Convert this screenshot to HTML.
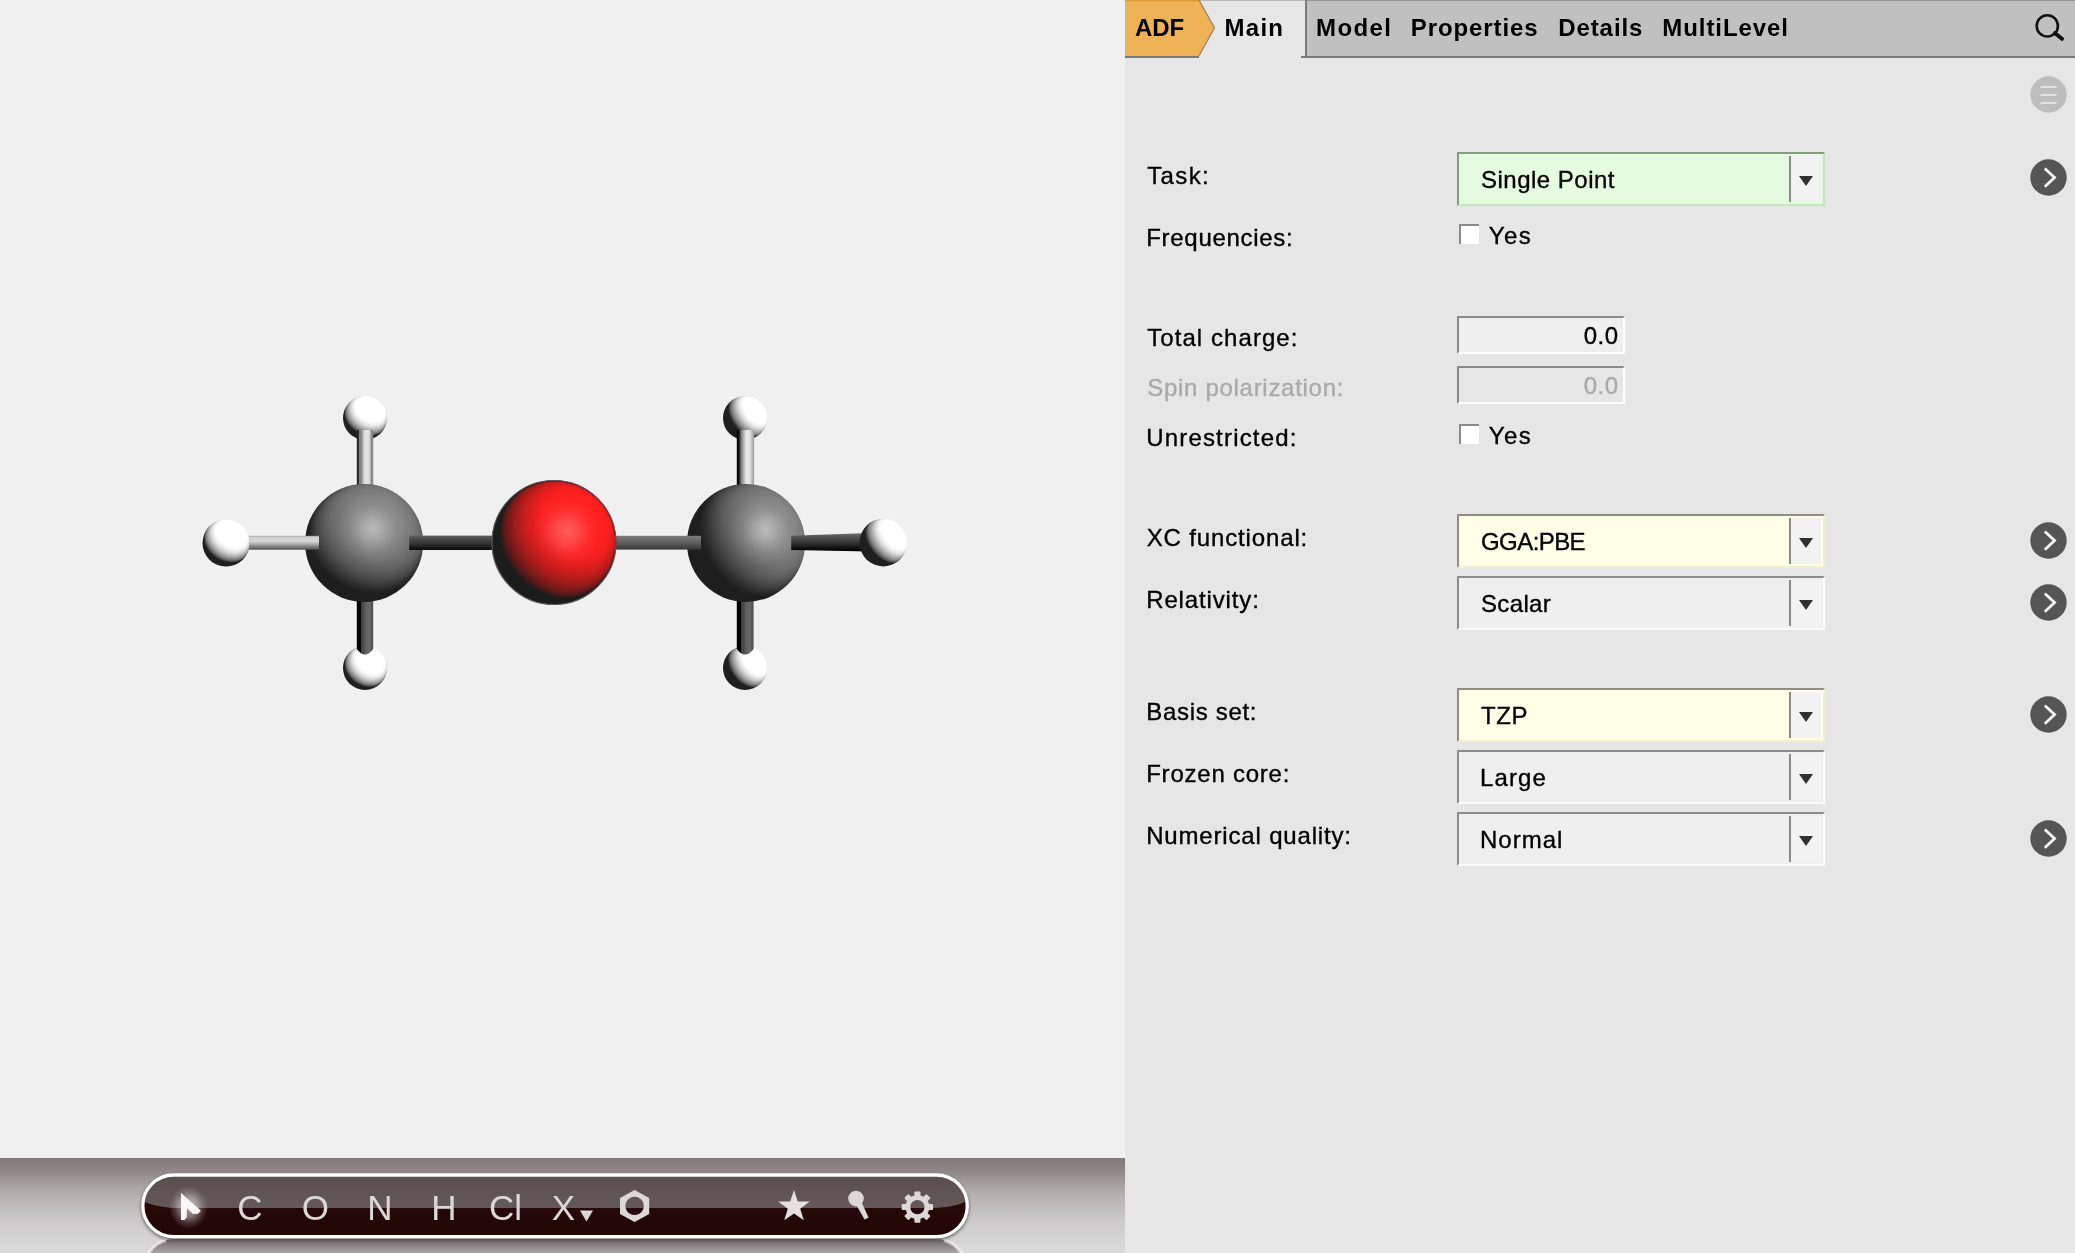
<!DOCTYPE html>
<html lang="en">
<head>
<meta charset="utf-8">
<title>ADF Input</title>
<style>
html,body{margin:0;padding:0;}
body{width:2075px;height:1253px;position:relative;overflow:hidden;background:#f0f0f0;
  font-family:"Liberation Sans","DejaVu Sans",sans-serif;color:#000;}
#root{position:absolute;left:0;top:0;width:2075px;height:1253px;will-change:transform;}
.abs{position:absolute;}
#view{left:0;top:0;width:1125px;height:1158px;background:#f0f0f0;}
#panel{left:1125px;top:0;width:950px;height:1253px;background:#e6e6e6;}
#tabbar{left:1125px;top:0;width:950px;height:55px;background:#c0c0c0;border-bottom:2px solid #7b7b7b;border-top:1px solid #969696;}
.tab{position:absolute;top:0;height:56px;line-height:56px;font-weight:bold;font-size:24px;white-space:nowrap;}
.lbl{position:absolute;font-size:24px;line-height:30px;white-space:nowrap;}
.lbl,.combo .txt,.entry,.yes{-webkit-text-stroke-width:0.35px;}
.dis{color:#a9a9a9;}
.combo{position:absolute;left:1457px;width:368px;height:54px;box-sizing:border-box;
  border-style:solid;border-width:2px;border-color:#8c8c8c #fbfbfb #fbfbfb #8c8c8c;background:#efefef;}
.combo .txt{position:absolute;top:0;height:50px;line-height:52px;font-size:24px;white-space:nowrap;}
.combo .btn{position:absolute;right:2px;top:2px;width:30px;height:46px;background:#f2f2f2;}
.combo .sep{position:absolute;left:330px;top:2px;width:2px;height:46px;background:#8a8a8a;}
.combo .arr{position:absolute;left:339.8px;top:22px;width:0;height:0;border-left:7.2px solid transparent;border-right:7.2px solid transparent;border-top:10px solid #303030;}
.green{background:#e4fbdf;border-color:#869a84 #c3e6c0 #c3e6c0 #869a84;}
.yellow{background:#fefde6;border-color:#8e8e84 #f1f0cc #f1f0cc #8e8e84;}
.entry{position:absolute;left:1457px;width:168px;height:38px;box-sizing:border-box;
  border-style:solid;border-width:2px;border-color:#8a8a8a #fdfdfd #fdfdfd #8a8a8a;background:#efefef;
  font-size:24px;line-height:36px;text-align:right;padding-right:4.5px;letter-spacing:0.45px;}
.chk{position:absolute;left:1459px;width:20px;height:20px;box-sizing:border-box;background:#fff;
  border-style:solid;border-width:2px 0 0 2px;border-color:#8a8a8a;}
.yes{position:absolute;font-size:24px;line-height:30px;}
.go{position:absolute;left:2030.2px;width:37px;height:37px;}
</style>
</head>
<body>
<div id="root">
<div id="view" class="abs"></div>
<div id="panel" class="abs"></div>
<div id="tabbar" class="abs"></div>
<!-- tabs -->
<div class="abs" style="left:1199px;top:0;width:106px;height:58px;background:#e6e6e6;border-top:1px solid #bcbcbc;box-sizing:border-box;"></div>
<div class="abs" style="left:1305px;top:0;width:2px;height:57px;background:#7b7b7b;"></div>
<div class="abs" style="left:1301px;top:56px;width:6px;height:2px;background:#7b7b7b;"></div>
<svg class="abs" style="left:1125px;top:0" width="95" height="58" viewBox="0 0 95 58">
  <polygon points="0,0 74,0 89.5,27.8 74,56 0,56" fill="#edb256"/>
  <rect x="0" y="0" width="74" height="1.2" fill="#d9982f"/>
  <polyline points="74,0 89.5,27.8 74,56" fill="none" stroke="#8d8470" stroke-width="1.2"/>
  <rect x="0" y="56" width="74" height="2" fill="#7b7b7b"/>
</svg>
<div class="tab" style="left:1135px;letter-spacing:-0.05px;">ADF</div>
<div class="tab" style="left:1224.6px;letter-spacing:1.23px;">Main</div>
<div class="tab" style="left:1316.1px;letter-spacing:1.38px;">Model</div>
<div class="tab" style="left:1410.8px;letter-spacing:0.9px;">Properties</div>
<div class="tab" style="left:1558.2px;letter-spacing:0.92px;">Details</div>
<div class="tab" style="left:1662.3px;letter-spacing:0.93px;">MultiLevel</div>
<!-- search icon -->
<svg class="abs" style="left:2030px;top:8px" width="40" height="40" viewBox="0 0 40 40">
  <circle cx="17.3" cy="17.9" r="10.6" fill="none" stroke="#111" stroke-width="2.6"/>
  <line x1="25" y1="25.2" x2="32" y2="30.8" stroke="#111" stroke-width="4" stroke-linecap="round"/>
</svg>
<!-- menu circle -->
<svg class="go" style="top:76px" viewBox="0 0 37 37">
  <circle cx="18.5" cy="18.5" r="18.2" fill="#bdbdbd"/>
  <rect x="10.5" y="10.1" width="16" height="1.8" fill="#e6e6e6"/>
  <rect x="10.5" y="18.1" width="16" height="1.8" fill="#e6e6e6"/>
  <rect x="10.5" y="26.1" width="16" height="1.8" fill="#e6e6e6"/>
</svg>
<!-- labels -->
<div class="lbl" style="left:1147.2px;letter-spacing:1.38px;top:161px;">Task:</div>
<div class="lbl" style="left:1146.2px;letter-spacing:0.71px;top:223px;">Frequencies:</div>
<div class="lbl" style="left:1147.2px;letter-spacing:1.07px;top:323px;">Total charge:</div>
<div class="lbl dis" style="left:1147.2px;letter-spacing:0.71px;top:373px;">Spin polarization:</div>
<div class="lbl" style="left:1146.2px;letter-spacing:1.18px;top:423px;">Unrestricted:</div>
<div class="lbl" style="left:1146.7px;letter-spacing:0.86px;top:523px;">XC functional:</div>
<div class="lbl" style="left:1146.2px;letter-spacing:0.86px;top:585px;">Relativity:</div>
<div class="lbl" style="left:1146.2px;letter-spacing:0.7px;top:697px;">Basis set:</div>
<div class="lbl" style="left:1146.2px;letter-spacing:0.77px;top:759px;">Frozen core:</div>
<div class="lbl" style="left:1146.2px;letter-spacing:0.83px;top:821px;">Numerical quality:</div>
<!-- combos -->
<div class="combo green" style="top:152px;"><div class="txt" style="left:22px;letter-spacing:0.49px;">Single Point</div><div class="btn"></div><div class="sep"></div><div class="arr"></div></div>
<div class="combo yellow" style="top:514px;"><div class="txt" style="left:22px;letter-spacing:-0.57px;">GGA:PBE</div><div class="btn"></div><div class="sep"></div><div class="arr"></div></div>
<div class="combo " style="top:576px;"><div class="txt" style="left:22px;letter-spacing:0.34px;">Scalar</div><div class="btn"></div><div class="sep"></div><div class="arr"></div></div>
<div class="combo yellow" style="top:688px;"><div class="txt" style="left:22px;letter-spacing:0.6px;">TZP</div><div class="btn"></div><div class="sep"></div><div class="arr"></div></div>
<div class="combo " style="top:750px;"><div class="txt" style="left:21px;letter-spacing:1.1px;">Large</div><div class="btn"></div><div class="sep"></div><div class="arr"></div></div>
<div class="combo " style="top:812px;"><div class="txt" style="left:21px;letter-spacing:1.0px;">Normal</div><div class="btn"></div><div class="sep"></div><div class="arr"></div></div>
<!-- entries -->
<div class="entry" style="top:316px;">0.0</div>
<div class="entry dis" style="top:366px;background:#e6e6e6;">0.0</div>
<!-- checkboxes -->
<div class="chk" style="top:224px;"></div><div class="yes" style="left:1488.8px;letter-spacing:1.45px;top:221px;">Yes</div>
<div class="chk" style="top:424px;"></div><div class="yes" style="left:1488.8px;letter-spacing:1.45px;top:421px;">Yes</div>
<!-- go buttons -->
<svg class="go" style="top:159.4px" viewBox="0 0 37 37"><circle cx="18.5" cy="18.5" r="18.2" fill="#555"/><polyline points="14.8,9.4 24.6,18.6 14.8,27.8" fill="none" stroke="#f6f6f6" stroke-width="2.8"/></svg>
<svg class="go" style="top:521.6px" viewBox="0 0 37 37"><circle cx="18.5" cy="18.5" r="18.2" fill="#555"/><polyline points="14.8,9.4 24.6,18.6 14.8,27.8" fill="none" stroke="#f6f6f6" stroke-width="2.8"/></svg>
<svg class="go" style="top:583.5px" viewBox="0 0 37 37"><circle cx="18.5" cy="18.5" r="18.2" fill="#555"/><polyline points="14.8,9.4 24.6,18.6 14.8,27.8" fill="none" stroke="#f6f6f6" stroke-width="2.8"/></svg>
<svg class="go" style="top:695.5px" viewBox="0 0 37 37"><circle cx="18.5" cy="18.5" r="18.2" fill="#555"/><polyline points="14.8,9.4 24.6,18.6 14.8,27.8" fill="none" stroke="#f6f6f6" stroke-width="2.8"/></svg>
<svg class="go" style="top:819.7px" viewBox="0 0 37 37"><circle cx="18.5" cy="18.5" r="18.2" fill="#555"/><polyline points="14.8,9.4 24.6,18.6 14.8,27.8" fill="none" stroke="#f6f6f6" stroke-width="2.8"/></svg>
<!--MOLECULE-->
<svg class="abs" style="left:0;top:0" width="1125" height="1158" viewBox="0 0 1125 1158">
  <defs>
    <radialGradient id="gC1" cx="0.678" cy="0.331" r="0.72" fx="0.572" fy="0.381">
      <stop offset="0" stop-color="#bcbcbc"/>
      <stop offset="0.12" stop-color="#b0b0b0"/>
      <stop offset="0.3" stop-color="#8c8c8c"/>
      <stop offset="0.55" stop-color="#606060"/>
      <stop offset="0.7" stop-color="#4a4a4a"/>
      <stop offset="0.85" stop-color="#2e2e2e"/>
      <stop offset="1" stop-color="#1e1e1e"/>
    </radialGradient>
    <radialGradient id="gC2" cx="0.704" cy="0.353" r="0.696" fx="0.666" fy="0.391">
      <stop offset="0" stop-color="#bcbcbc"/>
      <stop offset="0.12" stop-color="#b0b0b0"/>
      <stop offset="0.3" stop-color="#8c8c8c"/>
      <stop offset="0.55" stop-color="#606060"/>
      <stop offset="0.7" stop-color="#4a4a4a"/>
      <stop offset="0.85" stop-color="#2e2e2e"/>
      <stop offset="0.97" stop-color="#1e1e1e"/>
      <stop offset="1" stop-color="#1e1e1e"/>
    </radialGradient>
    <radialGradient id="gO" cx="0.711" cy="0.295" r="0.752" fx="0.585" fy="0.422">
      <stop offset="0" stop-color="#ff5e5e"/>
      <stop offset="0.12" stop-color="#ff4a4c"/>
      <stop offset="0.25" stop-color="#ff3032"/>
      <stop offset="0.36" stop-color="#f82222"/>
      <stop offset="0.475" stop-color="#d82020"/>
      <stop offset="0.72" stop-color="#a01a1a"/>
      <stop offset="0.86" stop-color="#501818"/>
      <stop offset="0.95" stop-color="#1c1c1c"/>
      <stop offset="1" stop-color="#1c1c1c"/>
    </radialGradient>
    <radialGradient id="gH1" cx="0.627" cy="0.302" r="0.648" fx="0.593" fy="0.348">
      <stop offset="0" stop-color="#ffffff"/>
      <stop offset="0.41" stop-color="#ffffff"/>
      <stop offset="0.59" stop-color="#dddddd"/>
      <stop offset="0.70" stop-color="#aaaaaa"/>
      <stop offset="0.84" stop-color="#555555"/>
      <stop offset="0.92" stop-color="#303030"/>
      <stop offset="1" stop-color="#202020"/>
    </radialGradient>
    <radialGradient id="gH2" cx="0.6875" cy="0.336" r="0.682" fx="0.682" fy="0.359">
      <stop offset="0" stop-color="#ffffff"/>
      <stop offset="0.38" stop-color="#ffffff"/>
      <stop offset="0.53" stop-color="#cccccc"/>
      <stop offset="0.69" stop-color="#888888"/>
      <stop offset="0.82" stop-color="#444444"/>
      <stop offset="0.91" stop-color="#1c1c1c"/>
      <stop offset="1" stop-color="#1c1c1c"/>
    </radialGradient>
    <linearGradient id="bT1" x1="0" x2="1" y1="0" y2="0">
      <stop offset="0" stop-color="#222"/><stop offset="0.1" stop-color="#2a2a2a"/><stop offset="0.16" stop-color="#808080"/><stop offset="0.32" stop-color="#909090"/><stop offset="0.42" stop-color="#cfcfcf"/><stop offset="0.55" stop-color="#e6e6e6"/><stop offset="0.75" stop-color="#dedede"/><stop offset="0.84" stop-color="#b0b0b0"/><stop offset="0.9" stop-color="#888"/><stop offset="1" stop-color="#888"/>
    </linearGradient>
    <linearGradient id="bT2" x1="0" x2="1" y1="0" y2="0">
      <stop offset="0" stop-color="#000"/><stop offset="0.1" stop-color="#0a0a0a"/><stop offset="0.18" stop-color="#444"/><stop offset="0.28" stop-color="#888"/><stop offset="0.42" stop-color="#bcbcbc"/><stop offset="0.55" stop-color="#e8e8e8"/><stop offset="0.72" stop-color="#e4e4e4"/><stop offset="0.84" stop-color="#c8c8c8"/><stop offset="1" stop-color="#989898"/>
    </linearGradient>
    <linearGradient id="bB" x1="0" x2="1" y1="0" y2="0">
      <stop offset="0" stop-color="#000"/><stop offset="0.22" stop-color="#000"/><stop offset="0.28" stop-color="#404040"/><stop offset="0.42" stop-color="#4c4c4c"/><stop offset="0.55" stop-color="#606060"/><stop offset="0.8" stop-color="#6a6a6a"/><stop offset="0.88" stop-color="#565656"/><stop offset="1" stop-color="#505050"/>
    </linearGradient>
    <linearGradient id="bHL" x1="0" x2="0" y1="0" y2="1">
      <stop offset="0" stop-color="#a8a8a8"/><stop offset="0.12" stop-color="#d0d0d0"/><stop offset="0.35" stop-color="#d8d8d8"/><stop offset="0.5" stop-color="#c0c0c0"/><stop offset="0.65" stop-color="#a0a0a0"/><stop offset="0.82" stop-color="#787878"/><stop offset="1" stop-color="#505050"/>
    </linearGradient>
    <linearGradient id="bCO" x1="0" x2="0" y1="0" y2="1">
      <stop offset="0" stop-color="#606060"/><stop offset="0.25" stop-color="#484848"/><stop offset="0.55" stop-color="#343434"/><stop offset="0.8" stop-color="#1a1a1a"/><stop offset="1" stop-color="#080808"/>
    </linearGradient>
    <linearGradient id="bOC" x1="0" x2="0" y1="0" y2="1">
      <stop offset="0" stop-color="#7c7c7c"/><stop offset="0.3" stop-color="#6a6a6a"/><stop offset="0.6" stop-color="#565656"/><stop offset="1" stop-color="#363636"/>
    </linearGradient>
    <linearGradient id="bHR" x1="0" x2="0" y1="0" y2="1">
      <stop offset="0" stop-color="#6c6c6c"/><stop offset="0.3" stop-color="#4a4a4a"/><stop offset="0.6" stop-color="#2c2c2c"/><stop offset="0.85" stop-color="#0c0c0c"/><stop offset="1" stop-color="#000"/>
    </linearGradient>
  <!--SPH--><radialGradient id="zO" gradientUnits="userSpaceOnUse" cx="554.3" cy="542.2" r="61"><stop offset="0" stop-color="rgb(206,0,0)"/><stop offset="0.2" stop-color="rgb(202,0,0)"/><stop offset="0.4" stop-color="rgb(189,0,0)"/><stop offset="0.55" stop-color="rgb(172,0,0)"/><stop offset="0.7" stop-color="rgb(147,0,0)"/><stop offset="0.8" stop-color="rgb(124,0,0)"/><stop offset="0.87" stop-color="rgb(102,0,0)"/><stop offset="0.92" stop-color="rgb(81,0,0)"/><stop offset="0.96" stop-color="rgb(58,0,0)"/><stop offset="0.985" stop-color="rgb(36,0,0)"/><stop offset="1" stop-color="rgb(0,0,0)"/></radialGradient>
<linearGradient id="uO" gradientUnits="userSpaceOnUse" x1="508.77" y1="582.79" x2="599.83" y2="501.61"><stop offset="0" stop-color="rgb(0,53,0)"/><stop offset="1" stop-color="rgb(0,202,0)"/></linearGradient>
<filter id="fO" color-interpolation-filters="sRGB" x="-5%" y="-5%" width="110%" height="110%"><feColorMatrix type="matrix" values="1 2 0 0 -1  1 2 0 0 -1  1 2 0 0 -1  0 0 0 1 0"/><feComponentTransfer><feFuncR type="table" tableValues="0.110 0.275 0.412 0.518 0.620 0.722 0.816 0.902 0.980 1.000 1.000"/><feFuncG type="table" tableValues="0.110 0.102 0.098 0.102 0.106 0.110 0.114 0.118 0.125 0.129 0.129"/><feFuncB type="table" tableValues="0.110 0.102 0.098 0.102 0.106 0.110 0.114 0.118 0.125 0.129 0.129"/></feComponentTransfer></filter>
<clipPath id="cO"><circle cx="554.3" cy="542.2" r="61"/></clipPath>

<radialGradient id="zC1" gradientUnits="userSpaceOnUse" cx="364.1" cy="542.9" r="59"><stop offset="0" stop-color="rgb(206,0,0)"/><stop offset="0.2" stop-color="rgb(202,0,0)"/><stop offset="0.4" stop-color="rgb(189,0,0)"/><stop offset="0.55" stop-color="rgb(172,0,0)"/><stop offset="0.7" stop-color="rgb(147,0,0)"/><stop offset="0.8" stop-color="rgb(124,0,0)"/><stop offset="0.87" stop-color="rgb(102,0,0)"/><stop offset="0.92" stop-color="rgb(81,0,0)"/><stop offset="0.96" stop-color="rgb(58,0,0)"/><stop offset="0.985" stop-color="rgb(36,0,0)"/><stop offset="1" stop-color="rgb(0,0,0)"/></radialGradient>
<linearGradient id="uC1" gradientUnits="userSpaceOnUse" x1="333.44" y1="593.31" x2="394.76" y2="492.49"><stop offset="0" stop-color="rgb(0,53,0)"/><stop offset="1" stop-color="rgb(0,202,0)"/></linearGradient>
<filter id="fC1" color-interpolation-filters="sRGB" x="-5%" y="-5%" width="110%" height="110%"><feColorMatrix type="matrix" values="1 2 0 0 -1  1 2 0 0 -1  1 2 0 0 -1  0 0 0 1 0"/><feComponentTransfer><feFuncR type="table" tableValues="0.118 0.149 0.196 0.251 0.306 0.361 0.408 0.447 0.478 0.502 0.510"/><feFuncG type="table" tableValues="0.118 0.149 0.196 0.251 0.306 0.361 0.408 0.447 0.478 0.502 0.510"/><feFuncB type="table" tableValues="0.118 0.149 0.196 0.251 0.306 0.361 0.408 0.447 0.478 0.502 0.510"/></feComponentTransfer></filter>
<clipPath id="cC1"><circle cx="364.1" cy="542.9" r="59"/></clipPath>

<radialGradient id="zC2" gradientUnits="userSpaceOnUse" cx="746" cy="542.9" r="59"><stop offset="0" stop-color="rgb(177,0,0)"/><stop offset="0.2" stop-color="rgb(174,0,0)"/><stop offset="0.4" stop-color="rgb(162,0,0)"/><stop offset="0.55" stop-color="rgb(148,0,0)"/><stop offset="0.7" stop-color="rgb(127,0,0)"/><stop offset="0.8" stop-color="rgb(106,0,0)"/><stop offset="0.87" stop-color="rgb(87,0,0)"/><stop offset="0.92" stop-color="rgb(69,0,0)"/><stop offset="0.96" stop-color="rgb(50,0,0)"/><stop offset="0.985" stop-color="rgb(31,0,0)"/><stop offset="1" stop-color="rgb(0,0,0)"/></radialGradient>
<linearGradient id="uC2" gradientUnits="userSpaceOnUse" x1="696.82" y1="575.49" x2="795.18" y2="510.31"><stop offset="0" stop-color="rgb(0,36,0)"/><stop offset="1" stop-color="rgb(0,219,0)"/></linearGradient>
<filter id="fC2" color-interpolation-filters="sRGB" x="-5%" y="-5%" width="110%" height="110%"><feColorMatrix type="matrix" values="1 2 0 0 -1  1 2 0 0 -1  1 2 0 0 -1  0 0 0 1 0"/><feComponentTransfer><feFuncR type="table" tableValues="0.118 0.149 0.196 0.251 0.306 0.361 0.408 0.447 0.478 0.502 0.510"/><feFuncG type="table" tableValues="0.118 0.149 0.196 0.251 0.306 0.361 0.408 0.447 0.478 0.502 0.510"/><feFuncB type="table" tableValues="0.118 0.149 0.196 0.251 0.306 0.361 0.408 0.447 0.478 0.502 0.510"/></feComponentTransfer></filter>
<clipPath id="cC2"><circle cx="746" cy="542.9" r="59"/></clipPath>

<radialGradient id="zH1" gradientUnits="userSpaceOnUse" cx="365" cy="418" r="22"><stop offset="0" stop-color="rgb(190,0,0)"/><stop offset="0.2" stop-color="rgb(186,0,0)"/><stop offset="0.4" stop-color="rgb(174,0,0)"/><stop offset="0.55" stop-color="rgb(158,0,0)"/><stop offset="0.7" stop-color="rgb(135,0,0)"/><stop offset="0.8" stop-color="rgb(114,0,0)"/><stop offset="0.87" stop-color="rgb(93,0,0)"/><stop offset="0.92" stop-color="rgb(74,0,0)"/><stop offset="0.96" stop-color="rgb(53,0,0)"/><stop offset="0.985" stop-color="rgb(33,0,0)"/><stop offset="1" stop-color="rgb(0,0,0)"/></radialGradient>
<linearGradient id="uH1" gradientUnits="userSpaceOnUse" x1="353.52" y1="436.77" x2="376.48" y2="399.23"><stop offset="0" stop-color="rgb(0,42,0)"/><stop offset="1" stop-color="rgb(0,213,0)"/></linearGradient>
<filter id="fH1" color-interpolation-filters="sRGB" x="-5%" y="-5%" width="110%" height="110%"><feColorMatrix type="matrix" values="1 2 0 0 -1  1 2 0 0 -1  1 2 0 0 -1  0 0 0 1 0"/><feComponentTransfer><feFuncR type="table" tableValues="0.125 0.329 0.486 0.612 0.729 0.847 0.941 1.000 1.000 1.000 1.000"/><feFuncG type="table" tableValues="0.125 0.329 0.486 0.612 0.729 0.847 0.941 1.000 1.000 1.000 1.000"/><feFuncB type="table" tableValues="0.125 0.329 0.486 0.612 0.729 0.847 0.941 1.000 1.000 1.000 1.000"/></feComponentTransfer></filter>
<clipPath id="cH1"><circle cx="365" cy="418" r="22"/></clipPath>

<radialGradient id="zH2" gradientUnits="userSpaceOnUse" cx="745" cy="418" r="22"><stop offset="0" stop-color="rgb(146,0,0)"/><stop offset="0.2" stop-color="rgb(143,0,0)"/><stop offset="0.4" stop-color="rgb(134,0,0)"/><stop offset="0.55" stop-color="rgb(122,0,0)"/><stop offset="0.7" stop-color="rgb(104,0,0)"/><stop offset="0.8" stop-color="rgb(88,0,0)"/><stop offset="0.87" stop-color="rgb(72,0,0)"/><stop offset="0.92" stop-color="rgb(57,0,0)"/><stop offset="0.96" stop-color="rgb(41,0,0)"/><stop offset="0.985" stop-color="rgb(25,0,0)"/><stop offset="1" stop-color="rgb(0,0,0)"/></radialGradient>
<linearGradient id="uH2" gradientUnits="userSpaceOnUse" x1="727.59" y1="431.45" x2="762.41" y2="404.55"><stop offset="0" stop-color="rgb(0,23,0)"/><stop offset="1" stop-color="rgb(0,232,0)"/></linearGradient>
<filter id="fH2" color-interpolation-filters="sRGB" x="-5%" y="-5%" width="110%" height="110%"><feColorMatrix type="matrix" values="1 2 0 0 -1  1 2 0 0 -1  1 2 0 0 -1  0 0 0 1 0"/><feComponentTransfer><feFuncR type="table" tableValues="0.125 0.329 0.486 0.612 0.729 0.847 0.941 1.000 1.000 1.000 1.000"/><feFuncG type="table" tableValues="0.125 0.329 0.486 0.612 0.729 0.847 0.941 1.000 1.000 1.000 1.000"/><feFuncB type="table" tableValues="0.125 0.329 0.486 0.612 0.729 0.847 0.941 1.000 1.000 1.000 1.000"/></feComponentTransfer></filter>
<clipPath id="cH2"><circle cx="745" cy="418" r="22"/></clipPath>

<radialGradient id="zH3" gradientUnits="userSpaceOnUse" cx="365" cy="668" r="22"><stop offset="0" stop-color="rgb(201,0,0)"/><stop offset="0.2" stop-color="rgb(197,0,0)"/><stop offset="0.4" stop-color="rgb(184,0,0)"/><stop offset="0.55" stop-color="rgb(168,0,0)"/><stop offset="0.7" stop-color="rgb(144,0,0)"/><stop offset="0.8" stop-color="rgb(121,0,0)"/><stop offset="0.87" stop-color="rgb(99,0,0)"/><stop offset="0.92" stop-color="rgb(79,0,0)"/><stop offset="0.96" stop-color="rgb(56,0,0)"/><stop offset="0.985" stop-color="rgb(35,0,0)"/><stop offset="1" stop-color="rgb(0,0,0)"/></radialGradient>
<linearGradient id="uH3" gradientUnits="userSpaceOnUse" x1="351.80" y1="685.60" x2="378.20" y2="650.40"><stop offset="0" stop-color="rgb(0,49,0)"/><stop offset="1" stop-color="rgb(0,206,0)"/></linearGradient>
<filter id="fH3" color-interpolation-filters="sRGB" x="-5%" y="-5%" width="110%" height="110%"><feColorMatrix type="matrix" values="1 2 0 0 -1  1 2 0 0 -1  1 2 0 0 -1  0 0 0 1 0"/><feComponentTransfer><feFuncR type="table" tableValues="0.125 0.329 0.486 0.612 0.729 0.847 0.941 1.000 1.000 1.000 1.000"/><feFuncG type="table" tableValues="0.125 0.329 0.486 0.612 0.729 0.847 0.941 1.000 1.000 1.000 1.000"/><feFuncB type="table" tableValues="0.125 0.329 0.486 0.612 0.729 0.847 0.941 1.000 1.000 1.000 1.000"/></feComponentTransfer></filter>
<clipPath id="cH3"><circle cx="365" cy="668" r="22"/></clipPath>

<radialGradient id="zH4" gradientUnits="userSpaceOnUse" cx="745" cy="668" r="22"><stop offset="0" stop-color="rgb(157,0,0)"/><stop offset="0.2" stop-color="rgb(154,0,0)"/><stop offset="0.4" stop-color="rgb(144,0,0)"/><stop offset="0.55" stop-color="rgb(131,0,0)"/><stop offset="0.7" stop-color="rgb(112,0,0)"/><stop offset="0.8" stop-color="rgb(94,0,0)"/><stop offset="0.87" stop-color="rgb(77,0,0)"/><stop offset="0.92" stop-color="rgb(62,0,0)"/><stop offset="0.96" stop-color="rgb(44,0,0)"/><stop offset="0.985" stop-color="rgb(27,0,0)"/><stop offset="1" stop-color="rgb(0,0,0)"/></radialGradient>
<linearGradient id="uH4" gradientUnits="userSpaceOnUse" x1="727.40" y1="681.20" x2="762.60" y2="654.80"><stop offset="0" stop-color="rgb(0,27,0)"/><stop offset="1" stop-color="rgb(0,228,0)"/></linearGradient>
<filter id="fH4" color-interpolation-filters="sRGB" x="-5%" y="-5%" width="110%" height="110%"><feColorMatrix type="matrix" values="1 2 0 0 -1  1 2 0 0 -1  1 2 0 0 -1  0 0 0 1 0"/><feComponentTransfer><feFuncR type="table" tableValues="0.125 0.329 0.486 0.612 0.729 0.847 0.941 1.000 1.000 1.000 1.000"/><feFuncG type="table" tableValues="0.125 0.329 0.486 0.612 0.729 0.847 0.941 1.000 1.000 1.000 1.000"/><feFuncB type="table" tableValues="0.125 0.329 0.486 0.612 0.729 0.847 0.941 1.000 1.000 1.000 1.000"/></feComponentTransfer></filter>
<clipPath id="cH4"><circle cx="745" cy="668" r="22"/></clipPath>

<radialGradient id="zH5" gradientUnits="userSpaceOnUse" cx="226.1" cy="543" r="23.6"><stop offset="0" stop-color="rgb(192,0,0)"/><stop offset="0.2" stop-color="rgb(189,0,0)"/><stop offset="0.4" stop-color="rgb(176,0,0)"/><stop offset="0.55" stop-color="rgb(161,0,0)"/><stop offset="0.7" stop-color="rgb(137,0,0)"/><stop offset="0.8" stop-color="rgb(115,0,0)"/><stop offset="0.87" stop-color="rgb(95,0,0)"/><stop offset="0.92" stop-color="rgb(75,0,0)"/><stop offset="0.96" stop-color="rgb(54,0,0)"/><stop offset="0.985" stop-color="rgb(33,0,0)"/><stop offset="1" stop-color="rgb(0,0,0)"/></radialGradient>
<linearGradient id="uH5" gradientUnits="userSpaceOnUse" x1="213.61" y1="563.03" x2="238.59" y2="522.97"><stop offset="0" stop-color="rgb(0,44,0)"/><stop offset="1" stop-color="rgb(0,211,0)"/></linearGradient>
<filter id="fH5" color-interpolation-filters="sRGB" x="-5%" y="-5%" width="110%" height="110%"><feColorMatrix type="matrix" values="1 2 0 0 -1  1 2 0 0 -1  1 2 0 0 -1  0 0 0 1 0"/><feComponentTransfer><feFuncR type="table" tableValues="0.125 0.329 0.486 0.612 0.729 0.847 0.941 1.000 1.000 1.000 1.000"/><feFuncG type="table" tableValues="0.125 0.329 0.486 0.612 0.729 0.847 0.941 1.000 1.000 1.000 1.000"/><feFuncB type="table" tableValues="0.125 0.329 0.486 0.612 0.729 0.847 0.941 1.000 1.000 1.000 1.000"/></feComponentTransfer></filter>
<clipPath id="cH5"><circle cx="226.1" cy="543" r="23.6"/></clipPath>

<radialGradient id="zH6" gradientUnits="userSpaceOnUse" cx="883.3" cy="542.6" r="23.8"><stop offset="0" stop-color="rgb(146,0,0)"/><stop offset="0.2" stop-color="rgb(143,0,0)"/><stop offset="0.4" stop-color="rgb(134,0,0)"/><stop offset="0.55" stop-color="rgb(122,0,0)"/><stop offset="0.7" stop-color="rgb(104,0,0)"/><stop offset="0.8" stop-color="rgb(88,0,0)"/><stop offset="0.87" stop-color="rgb(72,0,0)"/><stop offset="0.92" stop-color="rgb(57,0,0)"/><stop offset="0.96" stop-color="rgb(41,0,0)"/><stop offset="0.985" stop-color="rgb(25,0,0)"/><stop offset="1" stop-color="rgb(0,0,0)"/></radialGradient>
<linearGradient id="uH6" gradientUnits="userSpaceOnUse" x1="864.46" y1="557.15" x2="902.14" y2="528.05"><stop offset="0" stop-color="rgb(0,23,0)"/><stop offset="1" stop-color="rgb(0,232,0)"/></linearGradient>
<filter id="fH6" color-interpolation-filters="sRGB" x="-5%" y="-5%" width="110%" height="110%"><feColorMatrix type="matrix" values="1 2 0 0 -1  1 2 0 0 -1  1 2 0 0 -1  0 0 0 1 0"/><feComponentTransfer><feFuncR type="table" tableValues="0.125 0.329 0.486 0.612 0.729 0.847 0.941 1.000 1.000 1.000 1.000"/><feFuncG type="table" tableValues="0.125 0.329 0.486 0.612 0.729 0.847 0.941 1.000 1.000 1.000 1.000"/><feFuncB type="table" tableValues="0.125 0.329 0.486 0.612 0.729 0.847 0.941 1.000 1.000 1.000 1.000"/></feComponentTransfer></filter>
<clipPath id="cH6"><circle cx="883.3" cy="542.6" r="23.8"/></clipPath>

<radialGradient id="spO" gradientUnits="userSpaceOnUse" cx="566.9" cy="531" r="34"><stop offset="0" stop-color="#fff" stop-opacity="0.27"/><stop offset="0.3" stop-color="#fff" stop-opacity="0.19"/><stop offset="0.65" stop-color="#fff" stop-opacity="0.06"/><stop offset="1" stop-color="#fff" stop-opacity="0"/></radialGradient>
<radialGradient id="spC1" gradientUnits="userSpaceOnUse" cx="372.6" cy="528.9" r="36"><stop offset="0" stop-color="#fff" stop-opacity="0.47"/><stop offset="0.3" stop-color="#fff" stop-opacity="0.3"/><stop offset="0.65" stop-color="#fff" stop-opacity="0.09"/><stop offset="1" stop-color="#fff" stop-opacity="0"/></radialGradient>
<radialGradient id="spC2" gradientUnits="userSpaceOnUse" cx="765.5" cy="530" r="36"><stop offset="0" stop-color="#fff" stop-opacity="0.47"/><stop offset="0.3" stop-color="#fff" stop-opacity="0.3"/><stop offset="0.65" stop-color="#fff" stop-opacity="0.09"/><stop offset="1" stop-color="#fff" stop-opacity="0"/></radialGradient>
<!--/SPH--></defs>
  <!-- top / bottom hydrogens -->
  <!--H1--><g clip-path="url(#cH1)"><g filter="url(#fH1)"><circle cx="365" cy="418" r="24" fill="url(#zH1)"/><circle cx="365" cy="418" r="24" fill="url(#uH1)" style="mix-blend-mode:screen"/></g></g><!--/H1-->
  <!--H2--><g clip-path="url(#cH2)"><g filter="url(#fH2)"><circle cx="745" cy="418" r="24" fill="url(#zH2)"/><circle cx="745" cy="418" r="24" fill="url(#uH2)" style="mix-blend-mode:screen"/></g></g><!--/H2-->
  <!--H3--><g clip-path="url(#cH3)"><g filter="url(#fH3)"><circle cx="365" cy="668" r="24" fill="url(#zH3)"/><circle cx="365" cy="668" r="24" fill="url(#uH3)" style="mix-blend-mode:screen"/></g></g><!--/H3-->
  <!--H4--><g clip-path="url(#cH4)"><g filter="url(#fH4)"><circle cx="745" cy="668" r="24" fill="url(#zH4)"/><circle cx="745" cy="668" r="24" fill="url(#uH4)" style="mix-blend-mode:screen"/></g></g><!--/H4-->
  <!-- vertical bonds -->
  <rect x="356.8" y="430" width="16.4" height="58" fill="url(#bT1)"/>
  <rect x="736.8" y="430" width="17.3" height="58" fill="url(#bT2)"/>
  <path d="M356.8,596 H373.2 V649 Q365,660 356.8,649 Z" fill="url(#bB)"/>
  <path d="M736.8,596 H753.6 V649 Q745,660 736.8,649 Z" fill="url(#bB)"/>
  <!-- carbons -->
  <!--C1--><g clip-path="url(#cC1)"><g filter="url(#fC1)"><circle cx="364.1" cy="542.9" r="61" fill="url(#zC1)"/><circle cx="364.1" cy="542.9" r="61" fill="url(#uC1)" style="mix-blend-mode:screen"/></g></g><circle cx="372.6" cy="528.9" r="36" fill="url(#spC1)"/><!--/C1-->
  <!--C2--><g clip-path="url(#cC2)"><g filter="url(#fC2)"><circle cx="746" cy="542.9" r="61" fill="url(#zC2)"/><circle cx="746" cy="542.9" r="61" fill="url(#uC2)" style="mix-blend-mode:screen"/></g></g><circle cx="765.5" cy="530" r="36" fill="url(#spC2)"/><!--/C2-->
  <!-- horizontal bonds -->
  <rect x="240" y="535.8" width="79" height="13.9" fill="url(#bHL)"/>
  <rect x="409.2" y="535.6" width="90" height="14.4" fill="url(#bCO)"/>
  <rect x="608" y="535.8" width="93" height="13.8" fill="url(#bOC)"/>
  <polygon points="791.2,535.8 870,533 870,551.4 791.2,550" fill="url(#bHR)"/>
  <!-- oxygen -->
  <circle cx="554" cy="542.5" r="62.3" fill="#1c1c1c"/>
  <circle cx="554" cy="542.5" r="62" fill="none" stroke="#5a5a5a" stroke-width="1.2"/>
  <!--O--><g clip-path="url(#cO)"><g filter="url(#fO)"><circle cx="554.3" cy="542.2" r="63" fill="url(#zO)"/><circle cx="554.3" cy="542.2" r="63" fill="url(#uO)" style="mix-blend-mode:screen"/></g></g><circle cx="566.9" cy="531" r="34" fill="url(#spO)"/><!--/O-->
  <!-- side hydrogens -->
  <!--H5--><g clip-path="url(#cH5)"><g filter="url(#fH5)"><circle cx="226.1" cy="543" r="25.6" fill="url(#zH5)"/><circle cx="226.1" cy="543" r="25.6" fill="url(#uH5)" style="mix-blend-mode:screen"/></g></g><!--/H5-->
  <!--H6--><g clip-path="url(#cH6)"><g filter="url(#fH6)"><circle cx="883.3" cy="542.6" r="25.8" fill="url(#zH6)"/><circle cx="883.3" cy="542.6" r="25.8" fill="url(#uH6)" style="mix-blend-mode:screen"/></g></g><!--/H6-->
</svg>
<!--/MOLECULE-->
<!--TOOLBAR-->
<div class="abs" style="left:0;top:1158px;width:1125px;height:95px;background:linear-gradient(to bottom,#837a7a 0,#8e8686 12px,#9e9898 22px,#aeaaa9 32px,#b9b6b5 42px,#c2c0c0 52px,#cecccc 67px,#d6d5d5 82px,#dbdada 95px);"></div>
<svg class="abs" style="left:100px;top:1158px" width="920" height="95" viewBox="100 1158 920 95">
  <defs>
    <radialGradient id="glow"><stop offset="0" stop-color="#fff" stop-opacity="0.6"/><stop offset="0.4" stop-color="#fff" stop-opacity="0.45"/><stop offset="0.75" stop-color="#fff" stop-opacity="0.15"/><stop offset="1" stop-color="#fff" stop-opacity="0"/></radialGradient>
    <linearGradient id="gloss" x1="0" x2="0" y1="0" y2="1"><stop offset="0" stop-color="#594c4b"/><stop offset="1" stop-color="#655958"/></linearGradient>
    <linearGradient id="dark" x1="0" x2="0" y1="0" y2="1"><stop offset="0" stop-color="#2b0b09"/><stop offset="1" stop-color="#220705"/></linearGradient>
    <linearGradient id="refl" gradientUnits="userSpaceOnUse" x1="0" x2="0" y1="1239" y2="1256"><stop offset="0" stop-color="#4e4848" stop-opacity="0.8"/><stop offset="1" stop-color="#6a6464" stop-opacity="0.35"/></linearGradient>
    <clipPath id="inner"><rect x="144.4" y="1176.6" width="821.4" height="58.5" rx="29.25"/></clipPath>
    <filter id="blur2" x="-5%" y="-30%" width="110%" height="160%"><feGaussianBlur stdDeviation="1.4"/></filter>
    <filter id="blur1" x="-5%" y="-30%" width="110%" height="160%"><feGaussianBlur stdDeviation="0.45"/></filter>
    <filter id="blurT" x="-20%" y="-20%" width="140%" height="140%"><feGaussianBlur stdDeviation="0.35"/></filter>
  </defs>
  <!-- reflection -->
  <rect x="143.5" y="1239" width="823" height="62" rx="31" fill="url(#refl)"/>
  <path d="M143.5,1270 A31,31 0 0 1 166,1240.2 M966.5,1270 A31,31 0 0 0 944,1240.2" fill="none" stroke="#fff" stroke-opacity="0.6" stroke-width="3.2" filter="url(#blur1)"/>
  <!-- shadow -->
  <rect x="140.5" y="1174.5" width="829" height="66" rx="33" fill="#3a3434" fill-opacity="0.55" filter="url(#blur2)"/>
  <rect x="142.8" y="1175" width="824.5" height="61.7" rx="30.85" fill="url(#dark)"/>
  <path clip-path="url(#inner)" fill="url(#gloss)" d="M140,1170 H970 V1198.5 C964,1204 950,1207.9 934,1207.9 H176 C160,1207.9 146,1204 140,1198.5 Z"/>
  <rect x="142.8" y="1175" width="824.5" height="61.7" rx="30.85" fill="none" stroke="#fff" stroke-width="3.3" filter="url(#blur1)"/>
  <ellipse cx="188.5" cy="1207.5" rx="19.5" ry="21.5" fill="url(#glow)"/>
  <polygon points="181,1193.1 200.9,1210.8 198,1213.8 193,1213.9 187,1208.2 186.7,1217.6 184.4,1220.1 181,1220.1" fill="#f8f6f6" filter="url(#blurT)"/>
  <g filter="url(#blurT)">
  <g font-family="Liberation Sans, DejaVu Sans, sans-serif" font-size="35" fill="#dcd8d8" text-anchor="middle">
    <text x="250" y="1219.5">C</text>
    <text x="315.4" y="1219.5">O</text>
    <text x="380" y="1219.5">N</text>
    <text x="444" y="1219.5">H</text>
    <text x="505.5" y="1219.5">Cl</text>
    <text x="563.4" y="1219.5">X</text>
  </g>
  <polygon points="580,1210.5 593,1210.5 586.5,1221.5" fill="#dcd8d8"/>
  <!-- hexagon ring -->
  <path fill="#dcd8d8" fill-rule="evenodd" d="M634.6,1190 L649.2,1198 L649.2,1214 L634.6,1222 L620,1214 L620,1198 Z M634.6,1196.7 a9.2,9.2 0 1 0 0.01,0 Z"/>
  <!-- star -->
  <polygon fill="#e4e0e0" points="794,1190 797.8,1201.4 809.8,1201.6 800.2,1208.8 803.8,1220.3 794,1213.4 784.2,1220.3 787.8,1208.8 778.2,1201.6 790.2,1201.4"/>
  <!-- pin -->
  <circle cx="856" cy="1198.6" r="7.8" fill="#dcd8d8"/>
  <polygon points="855.2,1203 860.8,1200.5 868.6,1217.6 864.6,1219.4" fill="#dcd8d8"/>
  <!-- gear -->
  <g transform="translate(917.4,1207.1)" fill="#dcd8d8">
    <path fill-rule="evenodd" d="M0,-12 a12,12 0 1 0 0.01,0 Z M0,-7.1 a7.1,7.1 0 1 1 -0.01,0 Z"/>
    <g>
      <rect x="-3" y="-15.7" width="6" height="5.5" rx="0.8"/>
      <rect x="-3" y="10.2" width="6" height="5.5" rx="0.8"/>
      <rect x="-15.7" y="-3" width="5.5" height="6" rx="0.8"/>
      <rect x="10.2" y="-3" width="5.5" height="6" rx="0.8"/>
    </g>
    <g transform="rotate(45)">
      <rect x="-3" y="-15.7" width="6" height="5.5" rx="0.8"/>
      <rect x="-3" y="10.2" width="6" height="5.5" rx="0.8"/>
      <rect x="-15.7" y="-3" width="5.5" height="6" rx="0.8"/>
      <rect x="10.2" y="-3" width="5.5" height="6" rx="0.8"/>
    </g>
  </g>
  </g>
</svg>
<!--/TOOLBAR-->
</div>
</body>
</html>
